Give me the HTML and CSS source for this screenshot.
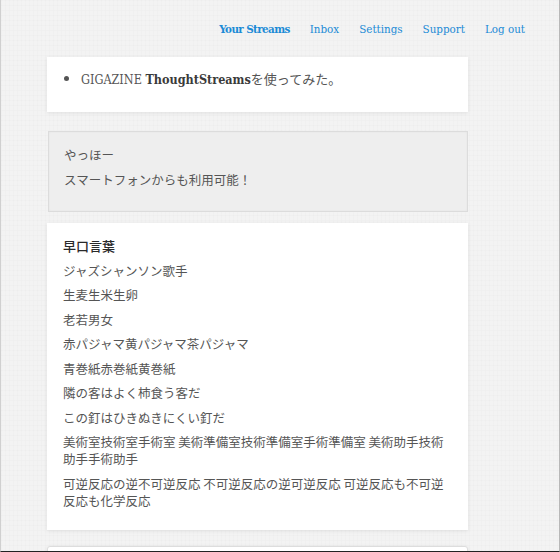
FILE: index.html
```html
<!DOCTYPE html>
<html lang="ja">
<head>
<meta charset="utf-8">
<title>ThoughtStreams</title>
<link rel="stylesheet" href="styles.css">
</head>
<body>
<div class="page">
  <nav class="nav">
    <a class="nav-link active" href="#">Your Streams</a>
    <a class="nav-link" href="#">Inbox</a>
    <a class="nav-link" href="#">Settings</a>
    <a class="nav-link" href="#">Support</a>
    <a class="nav-link" href="#">Log out</a>
  </nav>
  <main class="stream">
    <section class="card card-list">
      <ul class="bullets">
        <li><span class="latin">GIGAZINE </span><strong class="latin-bold">ThoughtStreams</strong>を使ってみた。</li>
      </ul>
    </section>
    <section class="card card-muted">
      <p class="line">やっほー</p>
      <p class="line">スマートフォンからも利用可能！</p>
    </section>
    <section class="card card-text">
      <h2 class="title">早口言葉</h2>
      <p class="line">ジャズシャンソン歌手</p>
      <p class="line">生麦生米生卵</p>
      <p class="line">老若男女</p>
      <p class="line">赤パジャマ黄パジャマ茶パジャマ</p>
      <p class="line">青巻紙赤巻紙黄巻紙</p>
      <p class="line">隣の客はよく柿食う客だ</p>
      <p class="line">この釘はひきぬきにくい釘だ</p>
      <p class="line">美術室技術室手術室 美術準備室技術準備室手術準備室 美術助手技術助手手術助手</p>
      <p class="line">可逆反応の逆不可逆反応 不可逆反応の逆可逆反応 可逆反応も不可逆反応も化学反応</p>
    </section>
    <section class="card card-next"></section>
  </main>
</div>
</body>
</html>
```
FILE: styles.css
```css
html, body {
  margin: 0;
  padding: 0;
}
body {
  background: #f3f3f3;
  font-family: "Noto Sans CJK JP", "Noto Sans", sans-serif;
  color: #555;
}
.page {
  box-sizing: border-box;
  height: 552px;
  overflow: hidden;
  border-left: 1px solid #d0d0d0;
  border-right: 1px solid #b8b8b8;
  border-bottom: 1px solid #222;
  background-color: #f3f3f3;
  background-image:
    repeating-linear-gradient(90deg, rgba(0,0,0,0.01) 0 1px, transparent 1px 4px),
    repeating-linear-gradient(0deg, rgba(0,0,0,0.01) 0 1px, transparent 1px 5px);
}
.nav {
  display: flex;
  justify-content: flex-end;
  align-items: center;
  height: 57px;
  padding-right: 34px;
  gap: 20px;
}
.nav-link {
  font-family: "DejaVu Serif", serif;
  font-stretch: condensed;
  font-size: 11.5px;
  color: #1c8bd6;
  text-decoration: none;
}
.nav-link.active {
  font-weight: bold;
  letter-spacing: -0.6px;
}
.stream {
  margin-left: 46px;
  width: 421px;
}
.card {
  background: #fff;
  box-shadow: 0 1px 4px rgba(0,0,0,0.08);
  box-sizing: border-box;
}
.card-list {
  height: 55px;
  padding: 13px 16px 0 25px;
  margin-bottom: 19px;
}
.bullets {
  margin: 0;
  padding-left: 9px;
  list-style: disc;
  font-size: 13px;
  line-height: 18px;
  color: #555;
}
.latin {
  font-family: "DejaVu Serif", serif;
  font-stretch: condensed;
  font-size: 12.5px;
  color: #555;
}
.latin-bold {
  font-family: "DejaVu Serif", serif;
  font-stretch: condensed;
  font-size: 12.5px;
  font-weight: bold;
  color: #3a3a3a;
}
.card-muted {
  background: #eeeeee;
  border: 1px solid #dcdcdc;
  box-shadow: inset 0 0 2px rgba(0,0,0,0.06);
  height: 81px;
  padding: 14px 15px 0;
  margin-left: 1px;
  margin-bottom: 11px;
}
.line {
  margin: 0 0 7.5px;
  font-size: 12.5px;
  line-height: 17px;
  color: #555;
}
.card-text {
  padding: 13.5px 16px 15px;
  height: 307px;
  margin-bottom: 16px;
}
.title {
  margin: 0 0 8px;
  font-size: 13px;
  line-height: 17px;
  font-weight: 500;
  color: #2a2a2a;
}
.card-next {
  height: 40px;
  border: 1px solid #ddd;
  border-radius: 3px;
}
```
